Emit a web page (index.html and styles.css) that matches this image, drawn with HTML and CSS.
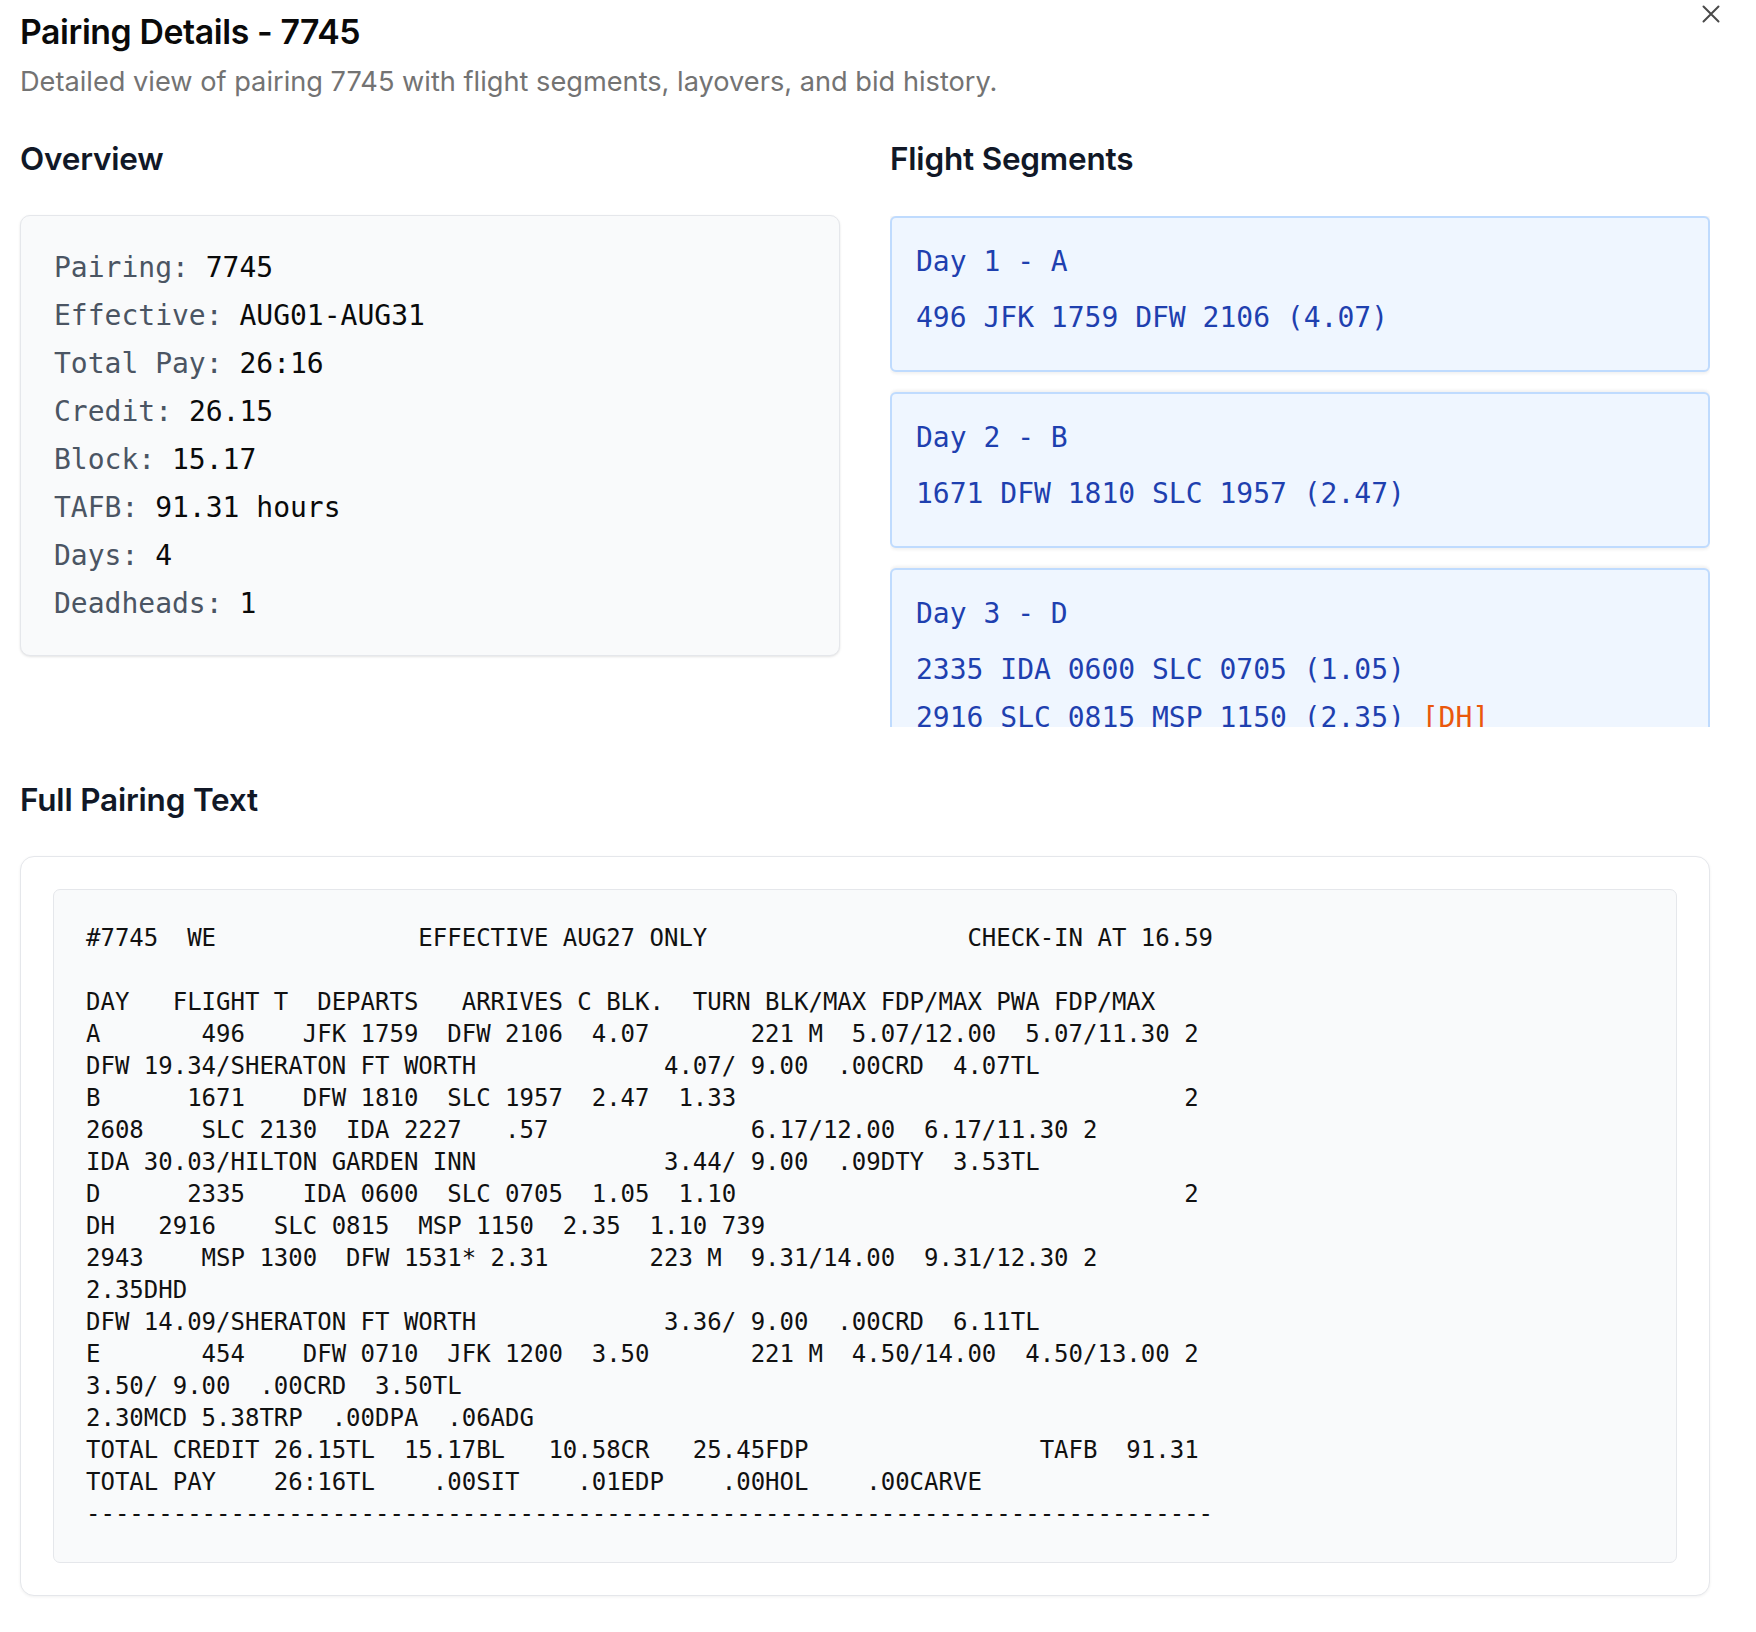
FILE: index.html
```html
<!DOCTYPE html>
<html lang="en">
<head>
<meta charset="utf-8">
<title>Pairing Details - 7745</title>
<link rel="stylesheet" href="styles.css">
</head>
<body>
<div class="dialog">
  <button class="close" aria-label="Close">
    <svg width="18" height="18" viewBox="0 0 18 18" fill="none" stroke="#4a4a4a" stroke-width="2" stroke-linecap="round"><path d="M1.5 1.5 L16.5 16.5 M16.5 1.5 L1.5 16.5"/></svg>
  </button>
  <header class="header">
    <h1 class="title">Pairing Details - 7745</h1>
    <p class="subtitle">Detailed view of pairing 7745 with flight segments, layovers, and bid history.</p>
  </header>

  <div class="columns">
    <section class="col">
      <h2 class="section-title">Overview</h2>
      <div class="overview-card">
        <div class="row"><span class="label">Pairing:</span> <span class="value">7745</span></div>
        <div class="row"><span class="label">Effective:</span> <span class="value">AUG01-AUG31</span></div>
        <div class="row"><span class="label">Total Pay:</span> <span class="value">26:16</span></div>
        <div class="row"><span class="label">Credit:</span> <span class="value">26.15</span></div>
        <div class="row"><span class="label">Block:</span> <span class="value">15.17</span></div>
        <div class="row"><span class="label">TAFB:</span> <span class="value">91.31 hours</span></div>
        <div class="row"><span class="label">Days:</span> <span class="value">4</span></div>
        <div class="row"><span class="label">Deadheads:</span> <span class="value">1</span></div>
      </div>
    </section>

    <section class="col">
      <h2 class="section-title">Flight Segments</h2>
      <div class="segments">
        <div class="seg-card">
          <div class="seg-day">Day 1 - A</div>
          <div class="seg-line">496 JFK 1759 DFW 2106 (4.07)</div>
        </div>
        <div class="seg-card">
          <div class="seg-day">Day 2 - B</div>
          <div class="seg-line">1671 DFW 1810 SLC 1957 (2.47)</div>
        </div>
        <div class="seg-card">
          <div class="seg-day">Day 3 - D</div>
          <div class="seg-line">2335 IDA 0600 SLC 0705 (1.05)</div>
          <div class="seg-line">2916 SLC 0815 MSP 1150 (2.35) <span class="dh">[DH]</span></div>
          <div class="seg-line">2943 MSP 1300 DFW 1531 (2.31)</div>
        </div>
        <div class="seg-card">
          <div class="seg-day">Day 4 - E</div>
          <div class="seg-line">454 DFW 0710 JFK 1200 (3.50)</div>
        </div>
      </div>
    </section>
  </div>

  <section class="full">
    <h2 class="section-title">Full Pairing Text</h2>
    <div class="full-box">
<pre class="pairing-text">#7745  WE              EFFECTIVE AUG27 ONLY                  CHECK-IN AT 16.59

DAY   FLIGHT T  DEPARTS   ARRIVES C BLK.  TURN BLK/MAX FDP/MAX PWA FDP/MAX
A       496    JFK 1759  DFW 2106  4.07       221 M  5.07/12.00  5.07/11.30 2
DFW 19.34/SHERATON FT WORTH             4.07/ 9.00  .00CRD  4.07TL
B      1671    DFW 1810  SLC 1957  2.47  1.33                               2
2608    SLC 2130  IDA 2227   .57              6.17/12.00  6.17/11.30 2
IDA 30.03/HILTON GARDEN INN             3.44/ 9.00  .09DTY  3.53TL
D      2335    IDA 0600  SLC 0705  1.05  1.10                               2
DH   2916    SLC 0815  MSP 1150  2.35  1.10 739
2943    MSP 1300  DFW 1531* 2.31       223 M  9.31/14.00  9.31/12.30 2
2.35DHD
DFW 14.09/SHERATON FT WORTH             3.36/ 9.00  .00CRD  6.11TL
E       454    DFW 0710  JFK 1200  3.50       221 M  4.50/14.00  4.50/13.00 2
3.50/ 9.00  .00CRD  3.50TL
2.30MCD 5.38TRP  .00DPA  .06ADG
TOTAL CREDIT 26.15TL  15.17BL   10.58CR   25.45FDP                TAFB  91.31
TOTAL PAY    26:16TL    .00SIT    .01EDP    .00HOL    .00CARVE
------------------------------------------------------------------------------</pre>
    </div>
  </section>
</div>
</body>
</html>
```
FILE: styles.css
```css
* { box-sizing: border-box; }

html, body {
  margin: 0;
  padding: 0;
  background: #ffffff;
}

body {
  font-family: Inter, "Noto Sans", "Liberation Sans", sans-serif;
  color: #0a0a0a;
}

.dialog {
  position: relative;
  width: 1690px;
  margin-left: 20px;
  padding-top: 10px;
  padding-bottom: 36px;
}

.close {
  position: absolute;
  top: 5px;
  right: -10px;
  width: 18px;
  height: 18px;
  padding: 0;
  border: 0;
  background: none;
  cursor: pointer;
  display: flex;
}

.title {
  margin: 0;
  font-size: 33.8px;
  line-height: 44px;
  font-weight: 600;
  letter-spacing: -0.4px;
  color: #0a0a0a;
}

.subtitle {
  margin: 10px 0 0;
  font-size: 27.2px;
  line-height: 35px;
  color: #737373;
}

.columns {
  display: grid;
  grid-template-columns: 820px 820px;
  column-gap: 50px;
  margin-top: 38px;
}

.section-title {
  margin: 0;
  font-size: 31.5px;
  line-height: 44px;
  font-weight: 600;
  letter-spacing: -0.2px;
  color: #111827;
}

.overview-card {
  margin-top: 34px;
  height: 441px;
  background: #f9fafb;
  border: 1px solid #e5e7eb;
  border-radius: 10px;
  box-shadow: 0 1px 3px rgba(0,0,0,0.08), 0 1px 2px rgba(0,0,0,0.04);
  padding: 28px 33px 24px;
  font-family: "DejaVu Sans Mono", "Liberation Mono", monospace;
  font-size: 28px;
}

.row {
  line-height: 48px;
  white-space: pre;
}

.label { color: #4b5563; }
.value { color: #0a0a0a; }

.segments {
  margin-top: 35px;
  height: 511px;
  overflow: hidden;
  display: flex;
  flex-direction: column;
  gap: 20px;
}

.seg-card {
  flex: none;
  background: #eff6ff;
  border: 2px solid #bfdbfe;
  border-radius: 6px;
  box-shadow: 0 -2px 3px rgba(0,0,0,0.06), 0 2px 3px rgba(0,0,0,0.06);
  padding: 20px 24px 28px;
  font-family: "DejaVu Sans Mono", "Liberation Mono", monospace;
  font-size: 28px;
  color: #1e40af;
}

.seg-day {
  line-height: 48px;
  margin-bottom: 8px;
}

.seg-line {
  line-height: 48px;
}

.dh { color: #ea580c; }

.full {
  margin-top: 51px;
}

.full-box {
  margin-top: 34px;
  background: #ffffff;
  border: 1px solid #e5e7eb;
  border-radius: 14px;
  box-shadow: 0 1px 3px rgba(0,0,0,0.06);
  padding: 32px;
}

.pairing-text {
  margin: 0;
  background: #f9fafb;
  border: 1px solid #e5e7eb;
  border-radius: 7px;
  padding: 32px;
  font-family: "DejaVu Sans Mono", "Liberation Mono", monospace;
  font-size: 24px;
  line-height: 32px;
  color: #111111;
  white-space: pre;
  overflow: hidden;
}
```
